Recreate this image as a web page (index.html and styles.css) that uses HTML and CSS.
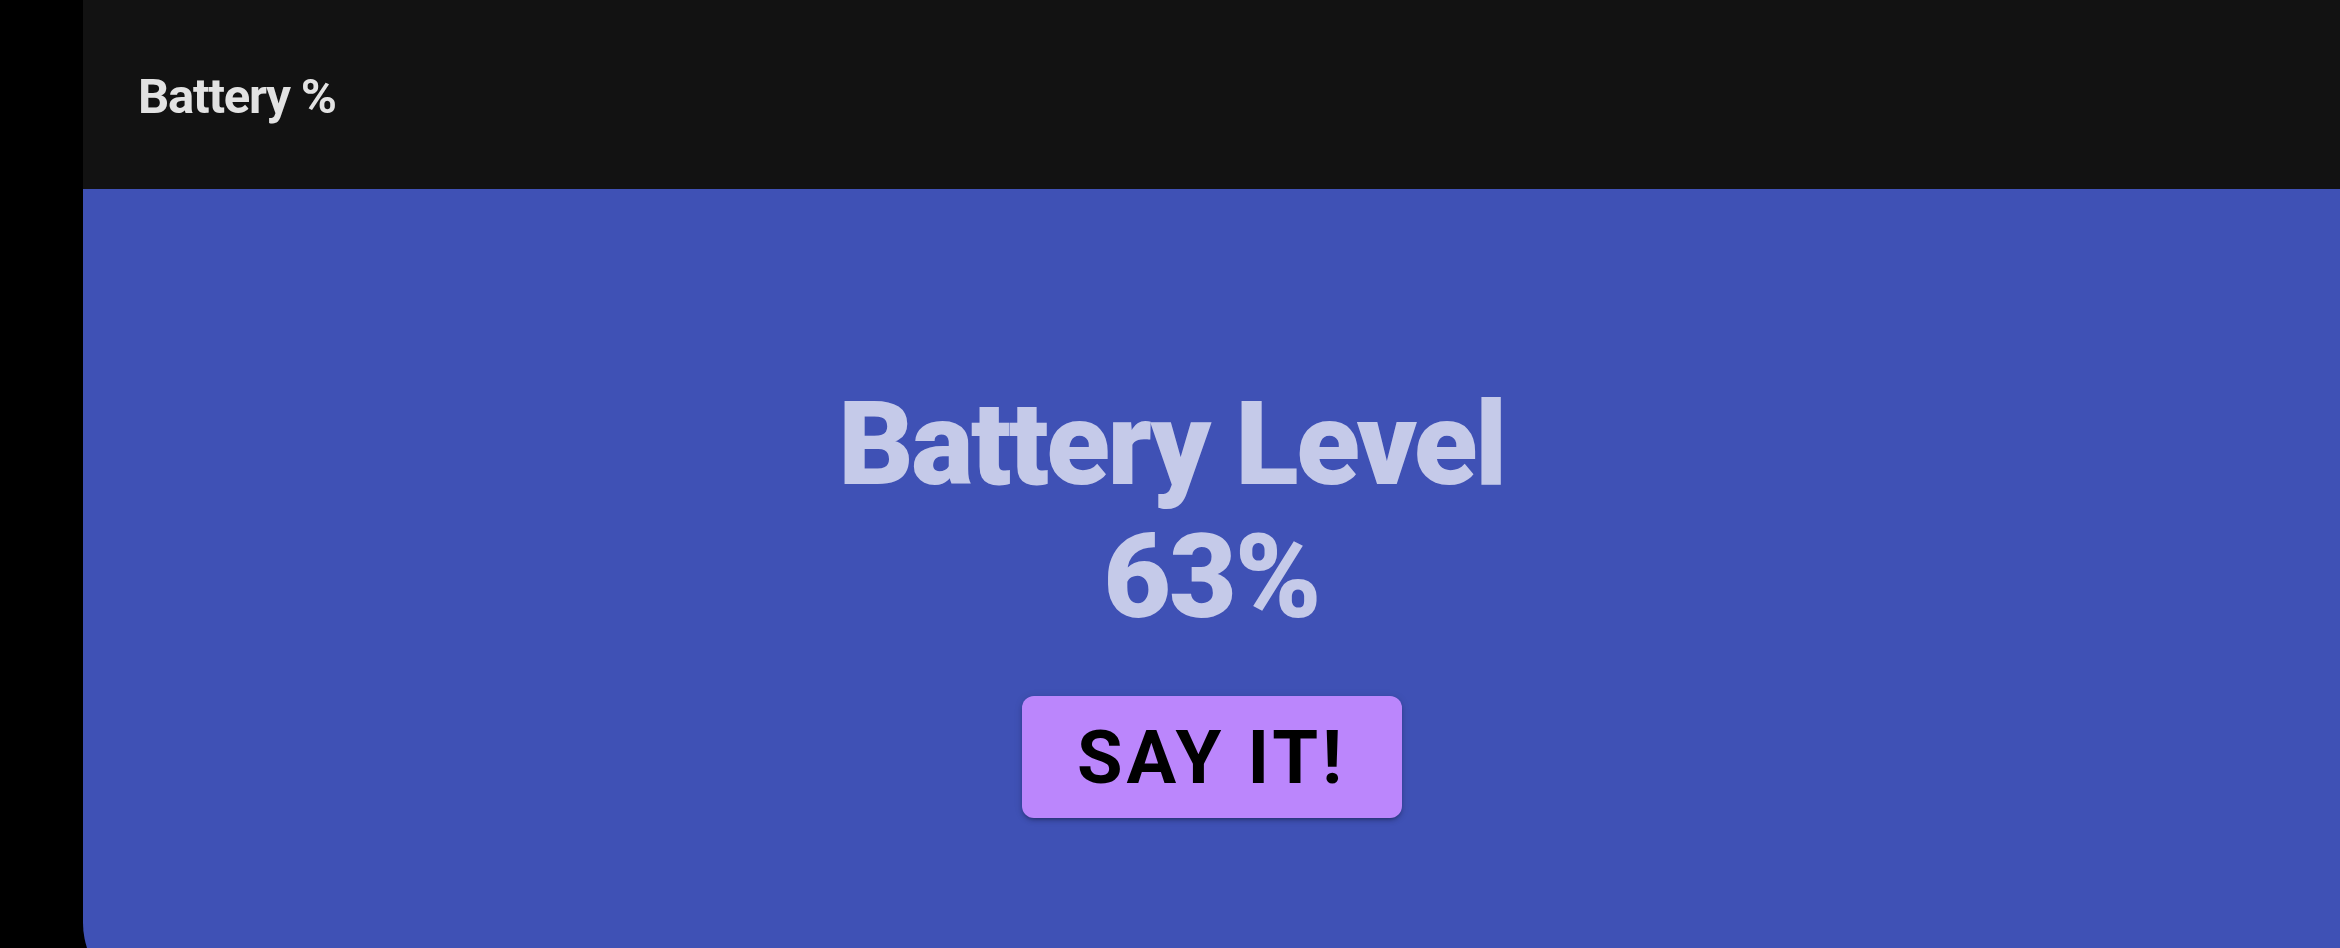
FILE: index.html
```html
<!DOCTYPE html>
<html>
<head>
<meta charset="utf-8">
<title>Battery %</title>
<link rel="stylesheet" href="styles.css">
</head>
<body>
<div class="frame">
  <div class="side"></div>
  <div class="app">
    <header class="appbar"><h1 class="appbar-title">Battery %</h1></header>
    <main class="content">
      <div class="level">
        <div class="line line-1">Battery Level</div>
        <div class="line line-2">63%</div>
      </div>
      <button class="say">SAY IT!</button>
    </main>
  </div>
</div>
</body>
</html>
```
FILE: styles.css
```css
html, body {
  margin: 0;
  padding: 0;
  background: #000;
  overflow: hidden;
  height: 948px;
}
.frame {
  display: flex;
  width: 2340px;
  height: 948px;
}
.side {
  width: 83px;
  flex: none;
  background: #000;
}
.app {
  flex: 1;
  display: flex;
  flex-direction: column;
  height: 1003px;
  border-bottom-left-radius: 80px;
  overflow: hidden;
  background: #3f51b5;
}
.appbar {
  height: 189px;
  flex: none;
  background: #121212;
  display: flex;
  align-items: center;
  padding-left: 55px;
  box-sizing: border-box;
}
.appbar-title {
  margin: 0;
  font-family: Roboto, "Liberation Sans", sans-serif;
  font-weight: 700;
  font-size: 49px;
  line-height: 1;
  color: #e2e2e2;
  letter-spacing: -1.2px;
  transform: translateY(2px);
}
.content {
  flex: 1;
  display: flex;
  flex-direction: column;
  align-items: center;
  padding-top: 189px;
}
.level {
  display: flex;
  flex-direction: column;
  align-items: center;
  font-family: Roboto, "Liberation Sans", sans-serif;
  font-weight: 900;
  font-size: 117px;
  line-height: 133px;
  color: #c5cae9;
}
.line {
  white-space: nowrap;
}
.line-1 {
  letter-spacing: -2.5px;
  transform: translateX(-40px);
}
.line-2 {
  letter-spacing: -2px;
}
.say {
  margin-top: 52px;
  width: 380px;
  height: 122px;
  border: none;
  border-radius: 12px;
  background: #bb86fc;
  color: #000;
  font-family: Roboto, "Liberation Sans", sans-serif;
  font-weight: 700;
  font-size: 74px;
  letter-spacing: 4px;
  padding: 0;
  box-shadow: 0 3px 3px -2px rgba(0,0,0,0.2), 0 3px 4px 0 rgba(0,0,0,0.14), 0 1px 8px 0 rgba(0,0,0,0.12);
}
```
